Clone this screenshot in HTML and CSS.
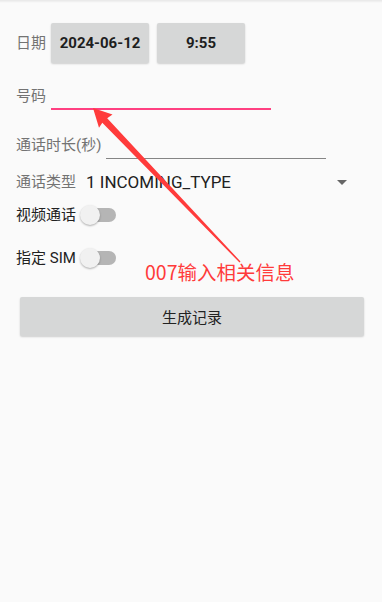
FILE: index.html
```html
<!DOCTYPE html>
<html lang="zh">
<head>
<meta charset="utf-8">
<title>通话记录</title>
<link rel="stylesheet" href="styles.css">
</head>
<body>
<div class="screen">
  <div class="page">
    <div class="row row-date">
      <span class="label">日期</span>
      <div class="btn btn-date">2024-06-12</div>
      <div class="btn btn-time">9:55</div>
    </div>
    <div class="row row-phone">
      <span class="label">号码</span>
      <div class="field field-active"></div>
    </div>
    <div class="row row-duration">
      <span class="label">通话时长(秒)</span>
      <div class="field field-idle"></div>
    </div>
    <div class="row row-type">
      <span class="label">通话类型</span>
      <span class="spinner-value">1 INCOMING_TYPE</span>
      <span class="spinner-arrow"></span>
    </div>
    <div class="row row-video">
      <span class="label dark">视频通话</span>
      <span class="switch"><span class="track"></span><span class="thumb"></span></span>
    </div>
    <div class="row row-sim">
      <span class="label dark">指定 SIM</span>
      <span class="switch"><span class="track"></span><span class="thumb"></span></span>
    </div>
    <div class="btn btn-main">生成记录</div>
  </div>

  <svg class="arrow" width="382" height="602" viewBox="0 0 382 602" xmlns="http://www.w3.org/2000/svg">
    <path d="M93 108 L112.5 114.5 L107.2 118.2 L240.5 261.5 L239.5 262.5 L102.3 122.8 L99 127.8 Z" fill="#ff3b3b"/>
  </svg>
  <div class="note">007输入相关信息</div>
</div>
</body>
</html>
```
FILE: styles.css
```css
html, body {
  margin: 0;
  padding: 0;
  background: #fafafa;
}
.screen {
  position: relative;
  width: 382px;
  height: 602px;
  overflow: hidden;
  background: #fafafa;
  font-family: Roboto, "Noto Sans CJK SC", sans-serif;
}
.screen::before {
  content: "";
  position: absolute;
  left: 0;
  top: 0;
  right: 0;
  height: 3px;
  background: linear-gradient(to bottom, rgba(0,0,0,0.08), rgba(0,0,0,0));
}
.page {
  padding: 23px 16px 0 16px;
  display: flex;
  flex-direction: column;
}
.row {
  display: flex;
  align-items: flex-start;
}
.label {
  font-size: 15px;
  line-height: 24px;
  color: #737373;
  white-space: nowrap;
}
.label.dark {
  color: #212121;
}
.row-date {
  height: 40px;
  align-items: center;
}
.row-date .label {
  margin-right: 5px;
}
.btn {
  background: #d6d7d7;
  border-radius: 2px;
  box-shadow: 0 1px 2px rgba(0,0,0,0.18);
  color: #1e1e1e;
  display: flex;
  align-items: center;
  justify-content: center;
  box-sizing: border-box;
}
.btn-date, .btn-time {
  height: 40px;
  font-size: 15px;
  font-weight: 700;
}
.btn-date {
  width: 98px;
}
.btn-time {
  width: 88px;
  margin-left: 8px;
}
.row-phone {
  margin-top: 21px;
}
.field {
  width: 220px;
  box-sizing: border-box;
}
.field-active {
  height: 26px;
  margin-left: 5px;
  border-bottom: 2px solid #ff4081;
}
.row-duration {
  margin-top: 23px;
}
.field-idle {
  height: 26px;
  margin-left: 5px;
  border-bottom: 1px solid #858585;
}
.row-type {
  margin-top: 11px;
  align-items: center;
}
.spinner-value {
  margin-left: 10px;
  font-size: 17px;
  line-height: 24px;
  color: #212121;
}
.spinner-arrow {
  margin-left: auto;
  margin-right: 19px;
  width: 0;
  height: 0;
  border-left: 5px solid transparent;
  border-right: 5px solid transparent;
  border-top: 5px solid #666666;
}
.row-video {
  margin-top: 9px;
  align-items: center;
}
.row-sim {
  margin-top: 19px;
  align-items: center;
}
.switch {
  position: relative;
  width: 37px;
  height: 24px;
  margin-left: 4px;
}
.track {
  position: absolute;
  left: 3px;
  top: 5px;
  width: 33px;
  height: 14px;
  border-radius: 7px;
  background: #b5b5b5;
}
.thumb {
  position: absolute;
  left: 0;
  top: 2px;
  width: 20px;
  height: 20px;
  border-radius: 50%;
  background: #f1f1f1;
  box-shadow: 0 1px 2px rgba(0,0,0,0.3);
}
.btn-main {
  margin-top: 27px;
  margin-left: 4px;
  margin-right: 2px;
  height: 39px;
  font-size: 15px;
  font-weight: 400;
  color: #222222;
}
.arrow {
  position: absolute;
  left: 0;
  top: 0;
}
.note {
  position: absolute;
  left: 145px;
  top: 259px;
  font-size: 19.5px;
  line-height: 26px;
  color: #ff3b3b;
  font-family: "Noto Sans CJK SC", Roboto, sans-serif;
  white-space: nowrap;
}
```
